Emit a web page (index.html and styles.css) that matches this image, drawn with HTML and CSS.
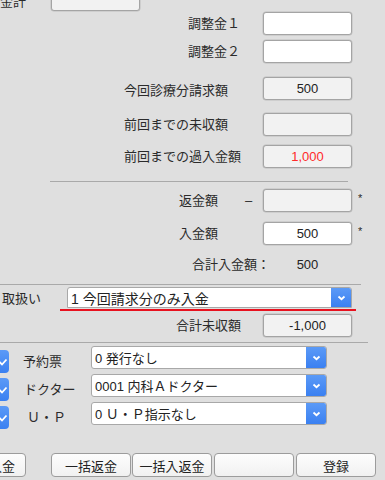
FILE: index.html
```html
<!DOCTYPE html>
<html lang="ja">
  <head>
    <meta charset="UTF-8" />
    <title>入金処理</title>
    <link rel="stylesheet" href="styles.css">
  </head>
  <body>
    <div class="page">
      <!-- 上部の合計 -->
      <div class="row row-top">
        <span class="top-label">金計</span>
        <div class="field ro"></div>
      </div>

      <div class="row gap-1">
        <div class="label-area"><span class="lbl pad-188">調整金１</span></div>
        <div class="field"></div>
      </div>
      <div class="row gap-5">
        <div class="label-area"><span class="lbl pad-188">調整金２</span></div>
        <div class="field"></div>
      </div>

      <div class="row gap-14">
        <div class="label-area"><span class="lbl pad-124 low">今回診療分請求額</span></div>
        <div class="field ro">500</div>
      </div>
      <div class="row gap-13">
        <div class="label-area"><span class="lbl pad-124">前回までの未収額</span></div>
        <div class="field ro"></div>
      </div>
      <div class="row gap-9">
        <div class="label-area"><span class="lbl pad-124">前回までの過入金額</span></div>
        <div class="field ro red">1,000</div>
      </div>

      <hr class="line line-mid" />

      <div class="row gap-7">
        <div class="label-area">
          <span class="lbl pad-179">返金額</span>
          <span class="minus">–</span>
        </div>
        <div class="field ro"></div>
        <span class="mark">*</span>
      </div>
      <div class="row gap-10">
        <div class="label-area"><span class="lbl pad-179">入金額</span></div>
        <div class="field">500</div>
        <span class="mark">*</span>
      </div>
      <div class="row gap-8">
        <div class="label-area"><span class="lbl pad-192">合計入金額：</span></div>
        <div class="value">500</div>
      </div>

      <hr class="line line-wide" />

      <!-- 取扱い -->
      <div class="row gap-2 row-select">
        <span class="lbl handle-label">取扱い</span>
        <div class="select select-handle">
          <span class="select-text">1 今回請求分のみ入金</span>
          <span class="select-btn">
            <svg width="9" height="6" viewBox="0 0 9 6"><polyline points="1.5,1.5 4.5,4.2 7.5,1.5" fill="none" stroke="#fff" stroke-width="1.8" /></svg>
          </span>
        </div>
      </div>
      <div class="redline"></div>

      <div class="row gap-3">
        <div class="label-area"><span class="lbl pad-176">合計未収額</span></div>
        <div class="field ro">-1,000</div>
      </div>

      <hr class="line line-wider" />

      <!-- 発行設定 -->
      <div class="check-row gap-3">
        <span class="check"><svg width="10" height="8" viewBox="0 0 10 8"><polyline points="1.5,4 4,6.5 8.5,1.5" fill="none" stroke="#fff" stroke-width="1.8" /></svg></span>
        <span class="lbl check-label pad-14">予約票</span>
        <div class="select select-opt">
          <span class="select-text">0 発行なし</span>
          <span class="select-btn">
            <svg width="9" height="6" viewBox="0 0 9 6"><polyline points="1.5,1.5 4.5,4.2 7.5,1.5" fill="none" stroke="#fff" stroke-width="1.8" /></svg>
          </span>
        </div>
      </div>
      <div class="check-row">
        <span class="check"><svg width="10" height="8" viewBox="0 0 10 8"><polyline points="1.5,4 4,6.5 8.5,1.5" fill="none" stroke="#fff" stroke-width="1.8" /></svg></span>
        <span class="lbl check-label pad-15">ドクター</span>
        <div class="select select-opt">
          <span class="select-text">0001 内科Ａドクター</span>
          <span class="select-btn">
            <svg width="9" height="6" viewBox="0 0 9 6"><polyline points="1.5,1.5 4.5,4.2 7.5,1.5" fill="none" stroke="#fff" stroke-width="1.8" /></svg>
          </span>
        </div>
      </div>
      <div class="check-row">
        <span class="check"><svg width="10" height="8" viewBox="0 0 10 8"><polyline points="1.5,4 4,6.5 8.5,1.5" fill="none" stroke="#fff" stroke-width="1.8" /></svg></span>
        <span class="lbl check-label pad-18">Ｕ・Ｐ</span>
        <div class="select select-opt">
          <span class="select-text">0 Ｕ・Ｐ指示なし</span>
          <span class="select-btn">
            <svg width="9" height="6" viewBox="0 0 9 6"><polyline points="1.5,1.5 4.5,4.2 7.5,1.5" fill="none" stroke="#fff" stroke-width="1.8" /></svg>
          </span>
        </div>
      </div>

      <!-- ボタン -->
      <div class="buttons">
        <button class="btn btn-first">入金</button>
        <button class="btn btn-2">一括返金</button>
        <button class="btn btn-3">一括入返金</button>
        <button class="btn btn-4"></button>
        <button class="btn btn-5">登録</button>
      </div>
    </div>
  </body>
</html>
```

FILE: styles.css
```css
* {
  margin: 0;
  padding: 0;
  box-sizing: border-box;
}

html,
body {
  background: #dfdfdf;
  overflow: hidden;
}

body {
  font-family: "Liberation Sans", "Noto Sans CJK JP", sans-serif;
  font-size: 13px;
  color: #2b2b2b;
  width: 385px;
  height: 480px;
}

.page {
  margin-top: -12px;
}

.row {
  display: flex;
  align-items: center;
  height: 23px;
}

.label-area {
  width: 263px;
  display: flex;
  align-items: center;
  white-space: nowrap;
}

.lbl {
  line-height: 15px;
  white-space: nowrap;
}

.low {
  margin-top: 3px;
}

.pad-124 { padding-left: 124px; }
.pad-176 { padding-left: 176px; }
.pad-179 { padding-left: 179px; }
.pad-188 { padding-left: 188px; }
.pad-192 { padding-left: 192px; }
.pad-14 { padding-left: 14px; }
.pad-15 { padding-left: 15px; }
.pad-18 { padding-left: 18px; }

.gap-1 { margin-top: 1px; }
.gap-2 { margin-top: 2px; }
.gap-3 { margin-top: 3px; }
.gap-5 { margin-top: 5px; }
.gap-7 { margin-top: 7px; }
.gap-8 { margin-top: 8px; }
.gap-9 { margin-top: 9px; }
.gap-10 { margin-top: 10px; }
.gap-13 { margin-top: 13px; }
.gap-14 { margin-top: 14px; }

.row-top .top-label {
  width: 51px;
  margin-top: 1px;
}

.row-top .field {
  width: 89px;
}

.field {
  width: 89px;
  height: 23px;
  background: #fff;
  border: 1px solid #a4a4a4;
  border-radius: 3px;
  box-shadow: 0 0 0 0.5px #bdbdbd;
  display: flex;
  align-items: center;
  justify-content: center;
  color: #222;
  font-size: 13px;
}

.field.ro {
  background: #f2f2f2;
}

.field.red {
  color: #ff2a2a;
}

.value {
  width: 89px;
  text-align: center;
  color: #222;
}

.minus {
  margin-left: 27px;
}

.mark {
  margin-left: 6px;
  margin-top: -6px;
  font-size: 11px;
}

.line {
  border: none;
  height: 1px;
  background: #a9a9a9;
}

.line-mid {
  margin: 13px 0 0 50px;
  width: 298px;
}

.line-wide {
  margin-top: 8px;
  width: 361px;
}

.line-wider {
  margin-top: 5px;
  width: 368px;
}

/* セレクト */
.row-select {
  height: 21px;
}

.handle-label {
  width: 67px;
  padding-left: 2px;
  margin-top: 2px;
}

.select {
  display: flex;
  height: 23px;
  background: #fff;
  border: 1px solid #a8a8a8;
  border-radius: 3px;
  overflow: hidden;
}

.select-handle {
  width: 285px;
  height: 21px;
  border-radius: 3px 3px 0 0;
}

.select-opt {
  width: 236px;
}

.select-text {
  flex: 1;
  padding-left: 3px;
  display: flex;
  align-items: center;
  color: #222;
  white-space: nowrap;
}

.select-handle .select-text {
  font-size: 14px;
}

.select-btn {
  width: 20px;
  background: linear-gradient(#5b9af7, #3a80f1);
  display: flex;
  align-items: center;
  justify-content: center;
}

.redline {
  margin: 1px 0 0 60px;
  width: 296px;
  height: 2px;
  background: #e8121f;
}

/* チェック行 */
.check-row {
  display: flex;
  height: 28px;
  align-items: flex-start;
}

.check {
  width: 23px;
  height: 23px;
  margin: 4px 0 0 -14px;
  border-radius: 4px;
  background: linear-gradient(#5b9af7, #3a80f1);
  display: flex;
  align-items: center;
  justify-content: flex-end;
  padding-right: 1px;
}

.check-label {
  width: 82px;
  margin-top: 8px;
}

/* ボタン */
.buttons {
  display: flex;
  margin: 23px 0 0 -54px;
}

.btn {
  width: 80px;
  height: 24px;
  font-family: "Liberation Sans", "Noto Sans CJK JP", sans-serif;
  font-size: 13px;
  color: #222;
  background: linear-gradient(#fdfdfd, #f1f1f1);
  border: 1px solid #9c9c9c;
  border-radius: 4px;
}

.btn-first {
  text-align: right;
  padding-right: 10px;
}

.btn-2 { margin-left: 25px; }
.btn-3 { margin-left: 1px; }
.btn-4 { margin-left: 2px; }
.btn-5 { margin-left: 2px; }
```
